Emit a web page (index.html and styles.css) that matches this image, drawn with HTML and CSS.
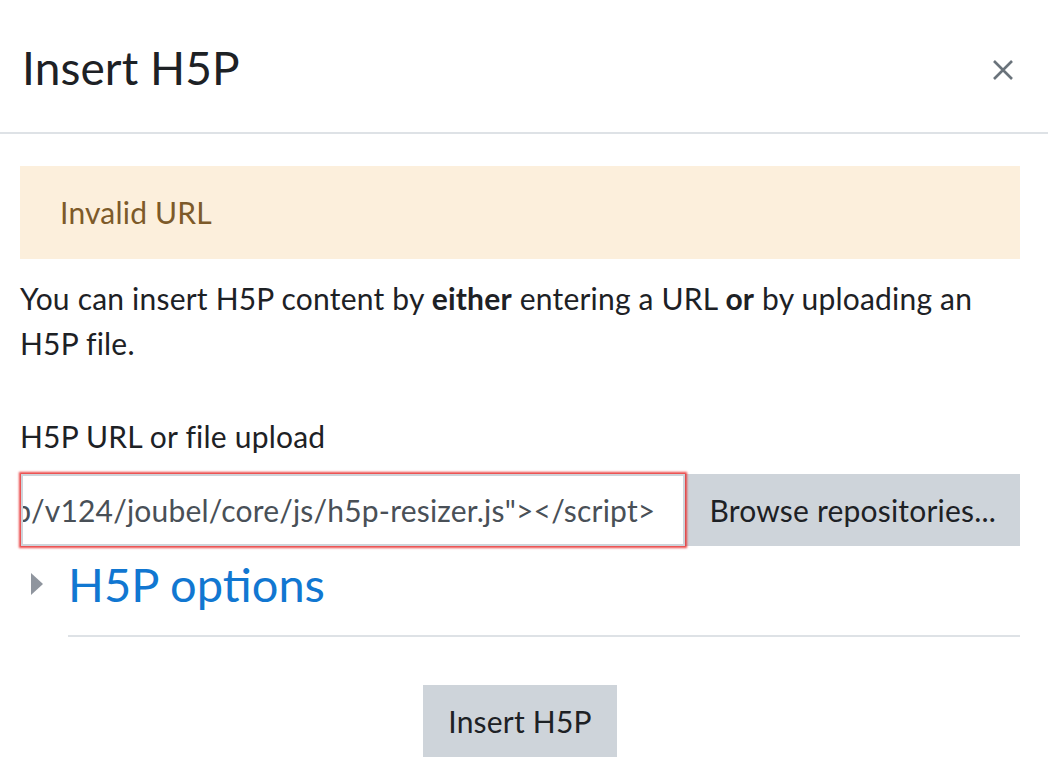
FILE: index.html
```html
<!DOCTYPE html>
<html>
<head>
  <title>Insert H5P</title>
  <link rel="stylesheet" href="styles.css">
</head>
<body>

  <div class="modal">

    <div class="modal-header">
      <h1 class="modal-title">Insert H5P</h1>
      <button class="close" aria-label="Close">
        <svg width="20" height="20" viewBox="0 0 20 20">
          <path d="M1 1 L19 19 M19 1 L1 19" stroke="#6a737b" stroke-width="2.6" fill="none"/>
        </svg>
      </button>
    </div>

    <div class="modal-body">
      <div class="alert">Invalid URL</div>

      <p class="intro">You can insert H5P content by <b>either</b> entering a URL <b>or</b> by uploading an H5P file.</p>

      <label class="field-label">H5P URL or file upload</label>
      <div class="input-group">
        <div class="url-input is-invalid">
          <span>&lt;script src="https://h5p.example.org/wp-content/plugins/h5p/v124/joubel/core/js/h5p-resizer.js"&gt;&lt;/script&gt;</span>
        </div>
        <button class="btn">Browse repositories...</button>
      </div>

      <div class="collapsible">
        <svg class="caret" width="14" height="24" viewBox="0 0 14 24">
          <path d="M1 1 L13 12 L1 23 Z" fill="#8f959e"/>
        </svg>
        <a href="#" class="options-link">H5P options</a>
      </div>
      <hr class="divider">

      <div class="actions">
        <button class="btn">Insert H5P</button>
      </div>
    </div>

  </div>

</body>
</html>
```

FILE: styles.css
```css
body {
  margin: 0;
  background: #fff;
  color: #1d2125;
  font-family: Lato, "Open Sans", sans-serif;
  font-size: 30px;
  line-height: 1.5;
  letter-spacing: 0.2px;
}
.modal {
  width: 1048px;
}
.modal-header {
  display: flex;
  align-items: center;
  justify-content: space-between;
  height: 134px;
  padding: 4px 28px 0 22px;
  border-bottom: 2px solid #dee2e6;
  box-sizing: border-box;
}
.modal-title {
  margin: 0;
  font-size: 46px;
  font-weight: 400;
  line-height: 1.2;
  letter-spacing: 0.1px;
  color: #1d2125;
}
.close {
  background: none;
  border: 0;
  padding: 0;
  margin: 4px 7px 0 0;
  display: flex;
}
.modal-body {
  padding: 32px 28px 30px 20px;
}
.alert {
  background: #fcefdc;
  color: #7d5a29;
  padding: 24px 40px;
  margin-bottom: 17px;
}
.intro {
  margin: 0 0 48px;
}
.field-label {
  display: block;
  margin-bottom: 15px;
}
.input-group {
  display: flex;
  height: 72px;
}
.url-input {
  flex: 1;
  display: flex;
  justify-content: flex-end;
  align-items: center;
  overflow: hidden;
  white-space: nowrap;
  padding: 0 28px 0 20px;
  border: 2px solid #ced4da;
  color: #495057;
  background: #fff;
}
.url-input.is-invalid {
  box-shadow: 0 0 2px 2px rgba(232, 40, 40, 0.85);
  position: relative;
  z-index: 1;
  margin-left: 1px;
}
.btn {
  font-family: inherit;
  font-size: 30px;
  line-height: 1.5;
  letter-spacing: 0.2px;
  color: #1d2125;
  background: #ced4da;
  border: 0;
  border-radius: 0;
  padding: 0 25px;
  height: 72px;
}
.input-group .btn {
  padding: 0 24px;
}
.collapsible {
  display: flex;
  align-items: center;
  margin-top: 10px;
}
.caret {
  margin: 0 24px 0 10px;
}
.options-link {
  font-size: 47px;
  line-height: 1.2;
  letter-spacing: 0;
  color: #1177d1;
  text-decoration: none;
}
.divider {
  margin: 23px 0 48px 48px;
  border: 0;
  border-top: 2px solid #dee2e6;
}
.actions {
  display: flex;
  justify-content: center;
}
```
